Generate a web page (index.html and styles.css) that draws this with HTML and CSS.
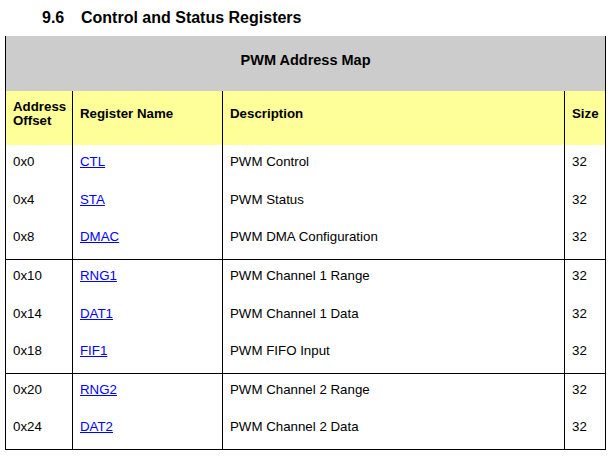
FILE: index.html
```html
<!DOCTYPE html>
<html>
<head>
<meta charset="utf-8">
<link rel="stylesheet" href="styles.css">
</head>
<body>
<h2 class="heading"><span class="num">9.6</span>Control and Status Registers</h2>
<table class="map">
  <colgroup>
    <col class="c1"><col class="c2"><col class="c3"><col class="c4">
  </colgroup>
  <thead>
    <tr class="title-row"><th colspan="4">PWM Address Map</th></tr>
    <tr class="head-row">
      <th>Address<br>Offset</th>
      <th>Register Name</th>
      <th>Description</th>
      <th>Size</th>
    </tr>
  </thead>
  <tbody class="group">
    <tr><td>0x0</td><td><a href="#">CTL</a></td><td>PWM Control</td><td>32</td></tr>
    <tr><td>0x4</td><td><a href="#">STA</a></td><td>PWM Status</td><td>32</td></tr>
    <tr><td>0x8</td><td><a href="#">DMAC</a></td><td>PWM DMA Configuration</td><td>32</td></tr>
  </tbody>
  <tbody class="group">
    <tr><td>0x10</td><td><a href="#">RNG1</a></td><td>PWM Channel 1 Range</td><td>32</td></tr>
    <tr><td>0x14</td><td><a href="#">DAT1</a></td><td>PWM Channel 1 Data</td><td>32</td></tr>
    <tr><td>0x18</td><td><a href="#">FIF1</a></td><td>PWM FIFO Input</td><td>32</td></tr>
  </tbody>
  <tbody class="group">
    <tr><td>0x20</td><td><a href="#">RNG2</a></td><td>PWM Channel 2 Range</td><td>32</td></tr>
    <tr><td>0x24</td><td><a href="#">DAT2</a></td><td>PWM Channel 2 Data</td><td>32</td></tr>
  </tbody>
</table>
</body>
</html>
```
FILE: styles.css
```css
html, body {
  margin: 0;
  padding: 0;
  background: #fff;
}
body {
  font-family: "Liberation Sans", Arial, sans-serif;
  color: #000;
  padding: 0 0 0 5px;
}
.heading {
  margin: 0;
  padding: 8px 0 0 37px;
  height: 28px;
  box-sizing: border-box;
  font-size: 16px;
  line-height: 20px;
  font-weight: bold;
}
.heading .num {
  display: inline-block;
  width: 39px;
}
.map {
  border-collapse: collapse;
  width: 600px;
  margin-top: 8px;
  font-size: 13.3px;
  table-layout: fixed;
  border-left: 1px solid #000;
  border-right: 1px solid #000;
  border-bottom: 1px solid #000;
}
.c1 { width: 67px; }
.c2 { width: 150px; }
.c3 { width: 342px; }
.c4 { width: 41px; }
.title-row th {
  background: #cccccc;
  height: 55px;
  padding: 0 0 7px;
  box-sizing: border-box;
  text-align: center;
  font-size: 14.5px;
}
.head-row th {
  background: #ffff99;
  height: 54px;
  padding: 0 6px 8px 7px;
  box-sizing: border-box;
  text-align: left;
  vertical-align: middle;
  line-height: 14px;
  border-left: 1px solid #000;
}
.head-row th:first-child { border-left: none; }
td {
  height: 38px;
  padding: 0 6px 6px 7px;
  box-sizing: border-box;
  vertical-align: middle;
  border-left: 1px solid #000;
}
td:first-child { border-left: none; }
.group + .group tr:first-child td {
  border-top: 1px solid #000;
}
a {
  color: #0000ff;
  text-decoration: underline;
}
```
